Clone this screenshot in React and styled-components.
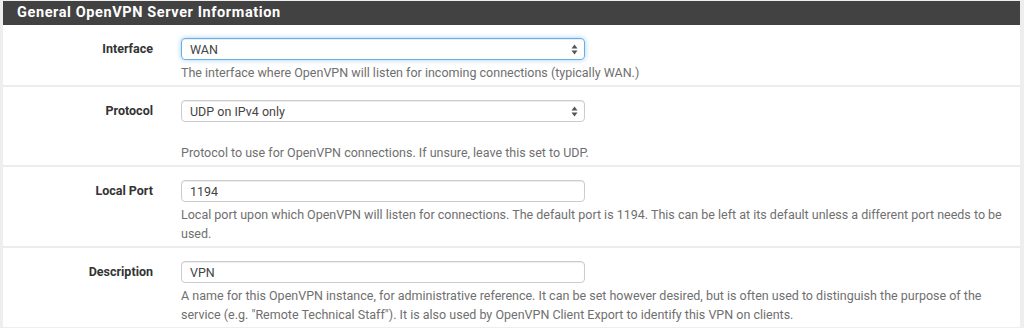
import React from "react";
import styled, { createGlobalStyle } from "styled-components";

const Global = createGlobalStyle`
  body {
    margin: 0;
    background: #eeeeee;
    font-family: Roboto, "Liberation Sans", sans-serif;
  }
`;

const Panel = styled.div`
  margin: 1px 4px 0 3px;
  background: #fff;
`;

const Header = styled.div`
  height: 24px;
  background: #424242;
  color: #fff;
  font-size: 14.5px;
  font-weight: 700;
  line-height: 24px;
  padding-left: 14px;
  letter-spacing: 0.6px;
`;

const Row = styled.div`
  display: grid;
  grid-template-columns: 150px 1fr;
  column-gap: 28px;
  padding: 13px 15px 3px 0;
  border-top: ${(p) => (p.$first ? "none" : "2px solid #ececec")};
`;

const Label = styled.div`
  text-align: right;
  font-size: 12.5px;
  font-weight: 700;
  color: #333;
  line-height: 22px;
`;

const Field = styled.div`
  display: flex;
  flex-direction: column;
`;

const Box = styled.div`
  width: 404px;
  height: 22px;
  box-sizing: border-box;
  border: 1px solid ${(p) => (p.$focus ? "#66afe9" : "#cccccc")};
  border-radius: 4px;
  box-shadow: ${(p) =>
    p.$focus
      ? "inset 0 1px 1px rgba(0,0,0,.075), 0 0 5px rgba(102,175,233,.6)"
      : "inset 0 1px 1px rgba(0,0,0,.075)"};
  display: flex;
  align-items: center;
  justify-content: space-between;
  padding: 0 6px 0 8px;
  font-size: 12.5px;
  color: #444;
`;

const Help = styled.div`
  margin-top: 3px;
  font-size: 12.5px;
  line-height: 19px;
  color: #6f6f6f;
  padding-top: ${(p) => (p.$gap ? "18px" : "0")};
`;

const Arrows = () => (
  <svg width="7" height="11" viewBox="0 0 7 11">
    <path d="M3.5 0.5 L6.5 4.5 L0.5 4.5 Z" fill="#555" />
    <path d="M3.5 10.5 L6.5 6.5 L0.5 6.5 Z" fill="#555" />
  </svg>
);

const rows = [
  {
    label: "Interface",
    value: "WAN",
    select: true,
    focus: true,
    help: "The interface where OpenVPN will listen for incoming connections (typically WAN.)",
  },
  {
    label: "Protocol",
    value: "UDP on IPv4 only",
    select: true,
    gap: true,
    help: "Protocol to use for OpenVPN connections. If unsure, leave this set to UDP.",
  },
  {
    label: "Local Port",
    value: "1194",
    help: "Local port upon which OpenVPN will listen for connections. The default port is 1194. This can be left at its default unless a different port needs to be used.",
  },
  {
    label: "Description",
    value: "VPN",
    help: 'A name for this OpenVPN instance, for administrative reference. It can be set however desired, but is often used to distinguish the purpose of the service (e.g. "Remote Technical Staff"). It is also used by OpenVPN Client Export to identify this VPN on clients.',
  },
];

export default function App() {
  return (
    <>
      <Global />
      <Panel>
        <Header>General OpenVPN Server Information</Header>
        {rows.map((r, i) => (
          <Row key={r.label} $first={i === 0}>
            <Label>{r.label}</Label>
            <Field>
              <Box $focus={r.focus}>
                <span>{r.value}</span>
                {r.select && <Arrows />}
              </Box>
              <Help $gap={r.gap}>{r.help}</Help>
            </Field>
          </Row>
        ))}
      </Panel>
    </>
  );
}
